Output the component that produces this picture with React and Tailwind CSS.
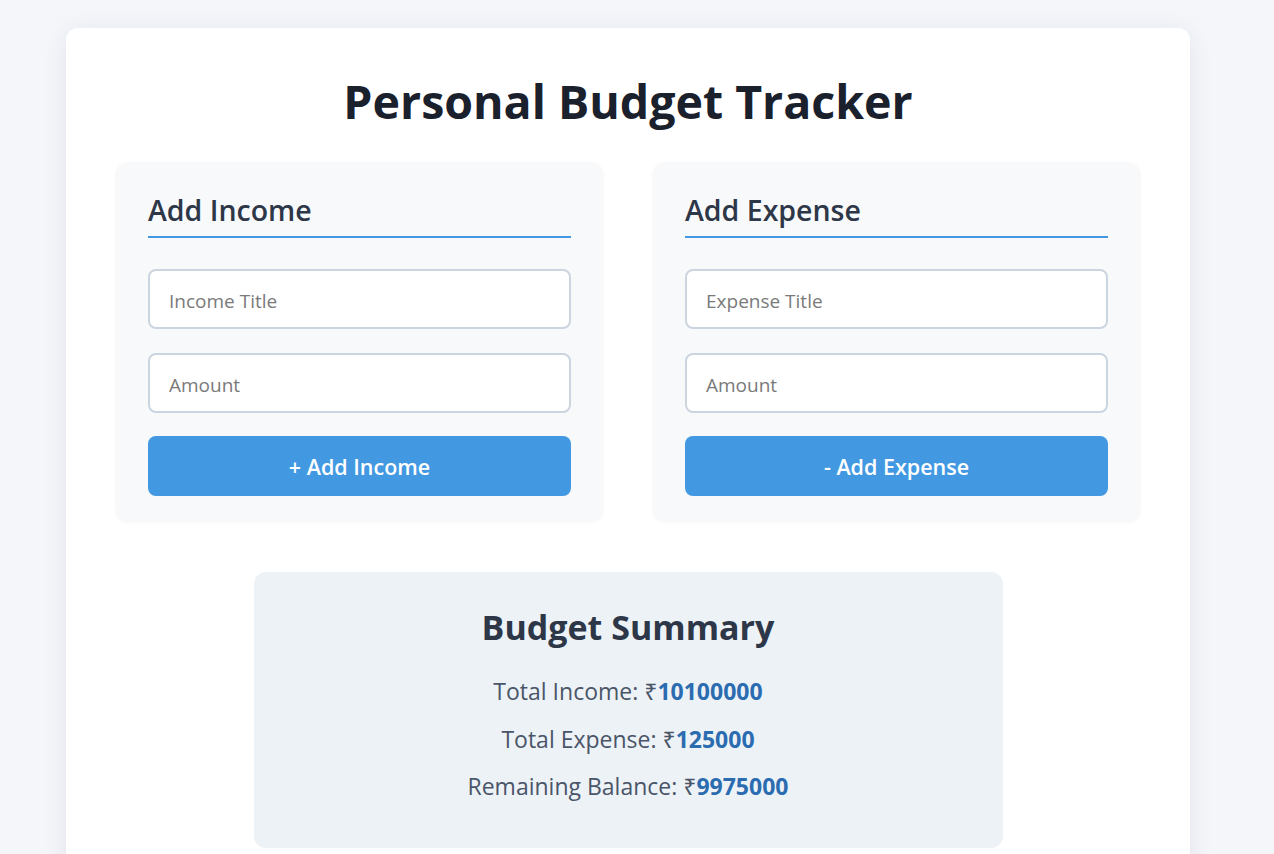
const Panel = ({ title, titleField, button }) => (
  <div className="bg-[#f7f9fb] rounded-[10px] shadow-[0_0_4px_rgba(0,0,0,0.07)] px-[31px] pt-[28px] pb-[25px]">
    <h2 className="text-[28.5px] font-semibold text-[#2d3748] leading-[36px] pb-[8px] border-b-2 border-[#4299e1]">
      {title}
    </h2>
    <div className="mt-[31px] flex flex-col gap-[24px]">
      <input
        className="h-[60px] w-full bg-white border-2 border-[#cbd5e0] rounded-[8px] px-[19px] pt-[3px] text-[19px] text-[#2d3748] placeholder:text-[#7a7a7a] outline-none"
        placeholder={titleField}
      />
      <input
        className="h-[60px] w-full bg-white border-2 border-[#cbd5e0] rounded-[8px] px-[19px] pt-[3px] text-[19px] text-[#2d3748] placeholder:text-[#7a7a7a] outline-none"
        placeholder="Amount"
      />
    </div>
    <button className="mt-[23px] h-[60px] w-full rounded-[8px] bg-[#4299e1] text-white text-[21.5px] font-semibold pt-[2px]">
      {button}
    </button>
  </div>
);

const Row = ({ label, value }) => (
  <p className="text-[23px] text-[#4a5568] leading-[28px]">
    {label}: ₹<span className="font-bold text-[#2b6cb0]">{value}</span>
  </p>
);

export default function App() {
  return (
    <div
      className="min-h-screen bg-[#f4f6fa] pt-[28px] pl-[66px] pr-[84px]"
      style={{ fontFamily: '"Open Sans", "Noto Sans", sans-serif' }}
    >
      <div className="bg-white rounded-[12px] shadow-[0_4px_24px_rgba(30,40,80,0.09)] px-[51px] pt-[41px] pb-[40px]">
        <h1 className="text-center text-[46.5px] font-bold text-[#1a202c] leading-[64px]">
          Personal Budget Tracker
        </h1>
        <div className="mt-[31px] grid grid-cols-2 gap-[52px]">
          <Panel title="Add Income" titleField="Income Title" button="+ Add Income" />
          <Panel title="Add Expense" titleField="Expense Title" button="- Add Expense" />
        </div>
        <div className="mt-[51px] mx-auto w-[749px] bg-[#edf2f7] rounded-[12px] pt-[34px] pb-[48px] text-center">
          <h2 className="text-[34px] font-bold text-[#2d3748] leading-[42px]">Budget Summary</h2>
          <div className="mt-[29px] flex flex-col gap-[19.5px]">
            <Row label="Total Income" value="10100000" />
            <Row label="Total Expense" value="125000" />
            <Row label="Remaining Balance" value="9975000" />
          </div>
        </div>
      </div>
    </div>
  );
}
